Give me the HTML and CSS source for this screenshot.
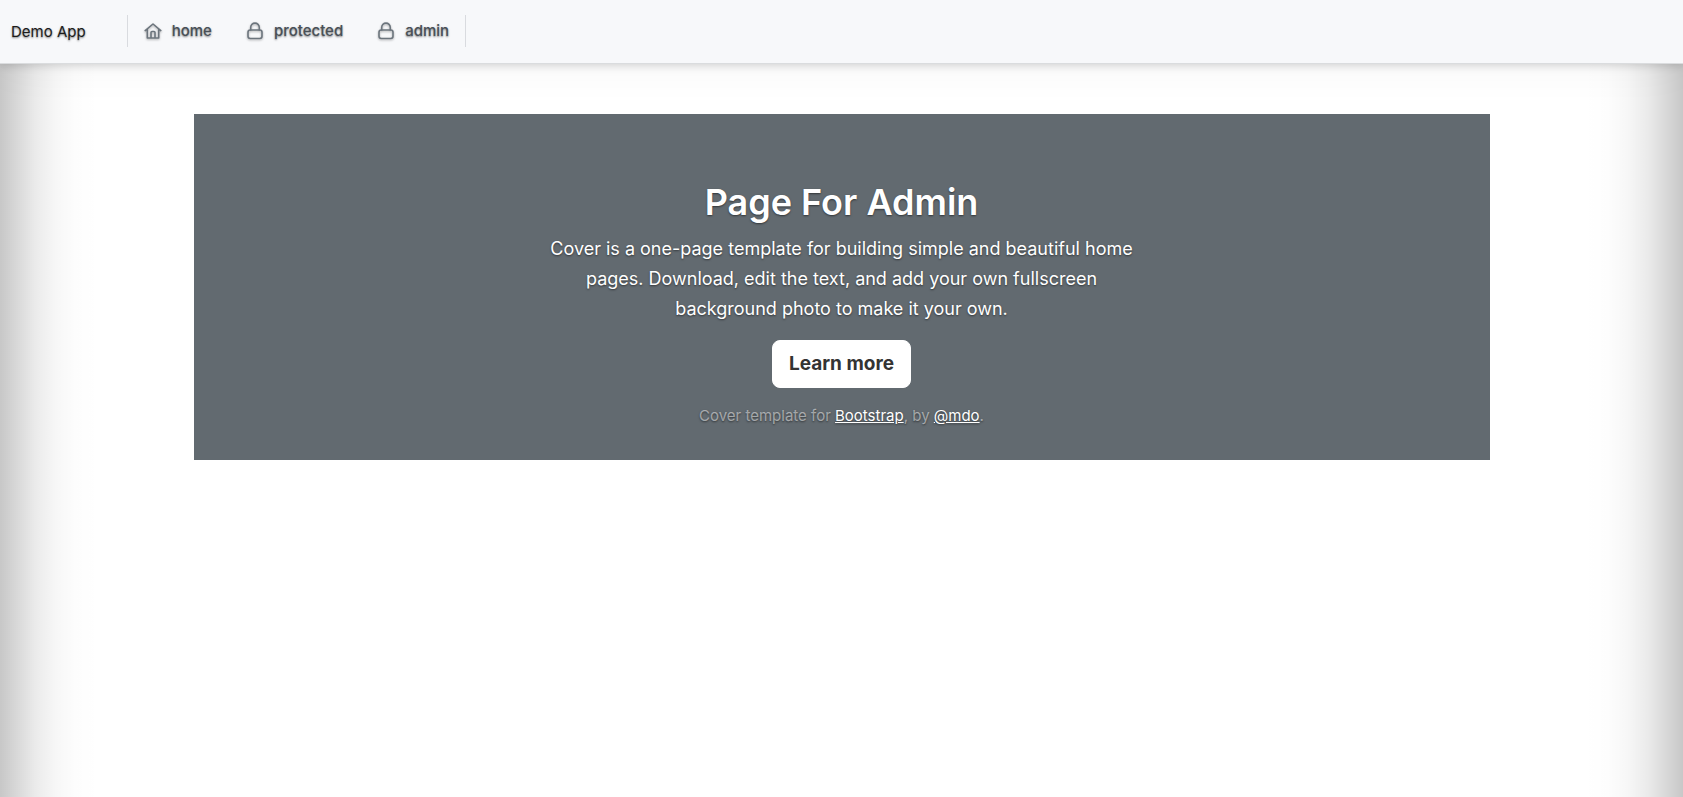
FILE: index.html
```
<!DOCTYPE html>
<html lang="en">
<head>
<meta charset="utf-8">
<meta name="viewport" content="width=device-width, initial-scale=1">
<title>Demo App</title>
<link rel="stylesheet" href="styles.css">
</head>
<body>
<svg class="sprite" aria-hidden="true">
  <symbol id="lock" viewBox="0 0 18 18">
    <rect x="2" y="8" width="14" height="8.5" rx="2.2"/>
    <path d="M4.7 8V5.400a4.300 4.300 0 0 1 8.600 0V8"/>
  </symbol>
  <symbol id="house" viewBox="0 0 18 18">
    <path d="M1.200 8.600 9 2l7.800 6.600M3.300 7.300V16h11.400V7.300M7 16v-5.500a1 1 0 0 1 1-1h2a1 1 0 0 1 1 1V16"/>
  </symbol>
</svg>
<header class="navbar">
  <a class="brand" href="#">Demo App</a>
  <nav class="menu">
    <a class="menu-link" href="#"><svg class="icon"><use href="#house"/></svg>home</a>
    <a class="menu-link" href="#"><svg class="icon"><use href="#lock"/></svg>protected</a>
    <a class="menu-link" href="#"><svg class="icon"><use href="#lock"/></svg>admin</a>
  </nav>
</header>
<main class="container">
  <section class="hero">
    <div class="cover">
      <h1 class="title">Page For Admin</h1>
      <p class="lead">Cover is a one-page template for building simple and beautiful home pages. Download, edit the text, and add your own fullscreen background photo to make it your own.</p>
      <button class="button" type="button">Learn more</button>
      <p class="credit">Cover template for <a href="#">Bootstrap</a>, by <a href="#">@mdo</a>.</p>
    </div>
  </section>
</main>
</body>
</html>
```
FILE: styles.css
```
*, *::before, *::after { box-sizing: border-box; }

body {
  --edge: rgba(0, 0, 0, .22) 0, rgba(0, 0, 0, .14) 20px, rgba(0, 0, 0, .08) 36px, rgba(0, 0, 0, .03) 56px, rgba(0, 0, 0, .008) 76px, transparent 100px;
  margin: 0;
  min-height: 100vh;
  background: linear-gradient(to right, var(--edge)), linear-gradient(to left, var(--edge)), #fff;
  font: 400 15px/24px Inter, "Liberation Sans", sans-serif;
  color: #212529;
  text-shadow: 0 1px 2px rgba(0, 0, 0, .5);
}

.sprite { display: none; }

.navbar {
  display: flex;
  align-items: center;
  gap: 41px;
  min-height: 64px;
  padding: 0 11px;
  background: #f7f8fa;
  border-bottom: 1px solid #dadcde;
  box-shadow: 0 2px 8px rgba(0, 0, 0, .15), 0 0 48px rgba(0, 0, 0, .05);
}

.brand {
  color: #1c1c1c;
  text-decoration: none;
}

.menu {
  display: flex;
  height: 32px;
  margin-bottom: 2px;
  padding: 0 16px;
  gap: 34px;
  border: solid #d9dbdf;
  border-width: 0 1px;
}

.menu-link {
  display: flex;
  align-items: center;
  gap: 10px;
  color: #495057;
  font-weight: 500;
  text-decoration: none;
}

.icon {
  width: 18px;
  height: 18px;
  fill: none;
  stroke: #6c757d;
  stroke-width: 1.600;
  stroke-linejoin: round;
  stroke-linecap: round;
  filter: drop-shadow(0 1px 1px rgba(0, 0, 0, .3));
}

.container {
  max-width: 1320px;
  margin: 0 auto;
  padding: 50px 12px 0;
}

.hero {
  padding: 64px 16px 16px;
  background: #626a70;
  color: #fff;
  text-align: center;
}

.cover {
  max-width: 640px;
  margin: 0 auto;
}

.title {
  margin: 0 0 8px;
  font-size: 36px;
  line-height: 48px;
  font-weight: 600;
}

.lead {
  margin: 0 auto 16px;
  max-width: 600px;
  font-size: 18px;
  line-height: 30px;
  font-weight: 400;
}

.button {
  padding: 8px 16px;
  border: 1px solid #fff;
  border-radius: 8px;
  background: #fff;
  color: #333;
  font: 700 19px/30px Inter, "Liberation Sans", sans-serif;
  text-shadow: none;
}

.credit {
  margin: 16px 0;
  color: rgba(255, 255, 255, .5);
}

.credit a { color: #fff; }
```
